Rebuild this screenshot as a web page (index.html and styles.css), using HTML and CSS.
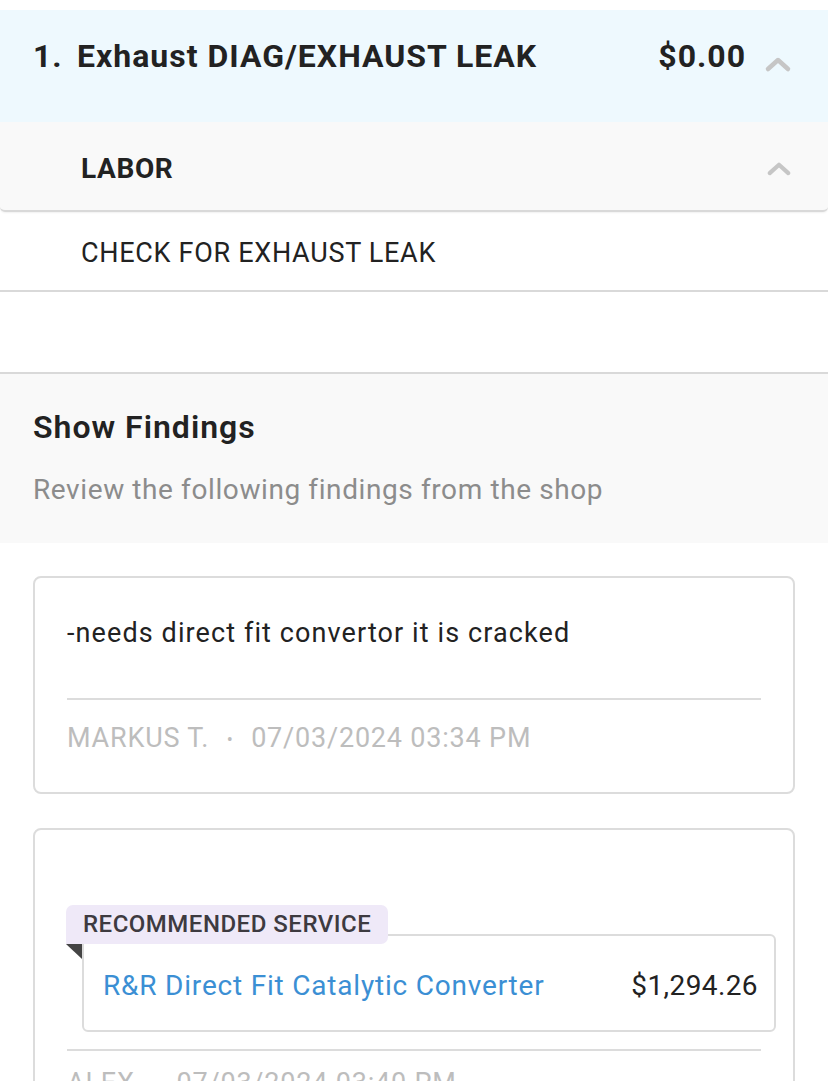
FILE: index.html
```html
<!DOCTYPE HTML>
<html>
	<head>
		<meta charset="utf-8">
		<title>Service findings</title>
		<link rel="stylesheet" href="styles.css">
	</head>
	<body>

		<div class="service-header">
			<span class="service-number">1.</span>
			<span class="service-title">Exhaust DIAG/EXHAUST LEAK</span>
			<span class="service-price">$0.00</span>
			<svg class="chevron" viewBox="0 0 28 18" width="28" height="18"><path d="M4 14 L14 5 L24 14" /></svg>
		</div>

		<div class="labor-header">
			<span class="labor-title">LABOR</span>
			<svg class="chevron chevron-small" viewBox="0 0 28 18" width="26" height="17"><path d="M4 14 L14 5 L24 14" /></svg>
		</div>

		<div class="labor-row">CHECK FOR EXHAUST LEAK</div>

		<div class="findings-header">
			<h2 class="findings-title">Show Findings</h2>
			<p class="findings-subtitle">Review the following findings from the shop</p>
		</div>

		<div class="findings-list">

			<div class="finding-card">
				<p class="finding-text">-needs direct fit convertor it is cracked</p>
				<div class="finding-meta">MARKUS T. <span class="dot">&bull;</span> 07/03/2024 03:34 PM</div>
			</div>

			<div class="finding-card">
				<p class="finding-text finding-text-empty"></p>
				<div class="recommended">
					<div class="recommended-badge">RECOMMENDED SERVICE</div>
					<div class="recommended-box">
						<a class="recommended-name" href="#">R&amp;R Direct Fit Catalytic Converter</a>
						<span class="recommended-price">$1,294.26</span>
					</div>
				</div>
				<div class="finding-meta">ALEX <span class="dot">&bull;</span> 07/03/2024 03:40 PM</div>
			</div>

		</div>

	</body>
</html>
```

FILE: styles.css
```css
* {
	box-sizing:				border-box;
}

html,
body {
	background:				#ffffff;
	color:					#222222;
	font-family:			Roboto, "Liberation Sans", sans-serif;
	margin:					0;
	padding:				0;
}

body {
	padding-top:			10px;
}

p,
h2 {
	margin:					0;
}

.chevron path {
	fill:					none;
	stroke:					#c6c6c6;
	stroke-linecap:			round;
	stroke-linejoin:		round;
	stroke-width:			4.5;
}

/* service header */

.service-header {
	align-items:			center;
	background:				#eef9fe;
	display:				flex;
	font-size:				32px;
	font-weight:			700;
	height:					112px;
	letter-spacing:			1px;
	padding:				0 36px 20px 33px;
}

.service-number {
	width:					44px;
}

.service-title {
	flex:					1;
}

.service-price {
	margin-right:			18px;
}

.chevron {
	margin-top:				16px;
}

/* labor */

.labor-header {
	align-items:			center;
	background:				#f9f9f9;
	border-bottom:			2px solid #d9d9d9;
	border-radius:			0 0 5px 5px;
	box-shadow:				0 1px 2px rgba(0,0,0,0.06);
	display:				flex;
	height:					90px;
	justify-content:		space-between;
	padding:				4px 36px 0 81px;
}

.labor-title {
	font-size:				28px;
	font-weight:			700;
	letter-spacing:			0.6px;
}

.chevron-small {
	margin-top:				0;
}

.labor-row {
	align-items:			center;
	border-bottom:			2px solid #d9d9d9;
	display:				flex;
	font-size:				27px;
	height:					80px;
	letter-spacing:			0.7px;
	padding:				4px 81px 0;
}

/* findings */

.findings-header {
	background:				#f9f9f9;
	border-top:				2px solid #d9d9d9;
	margin-top:				80px;
	padding:				33px 33px 33px;
}

.findings-title {
	font-size:				32px;
	font-weight:			600;
	letter-spacing:			1px;
	line-height:			40px;
}

.findings-subtitle {
	color:					#8c8c8c;
	font-size:				28px;
	letter-spacing:			0.6px;
	line-height:			40px;
	margin-top:				23px;
}

.findings-list {
	display:				flex;
	flex-direction:			column;
	gap:					34px;
	padding:				33px;
}

.finding-card {
	border:					2px solid #dcdcdc;
	border-radius:			8px;
	padding:				34px 32px 0;
}

.finding-text {
	border-bottom:			2px solid #dcdcdc;
	font-size:				27px;
	letter-spacing:			1.1px;
	line-height:			36px;
	margin-top:				3px;
	padding-bottom:			47px;
}

.finding-text-empty {
	border-bottom:			none;
	height:					41px;
	margin-top:				0;
	padding:				0;
}

.finding-meta {
	color:					#bdbdbd;
	font-size:				27px;
	letter-spacing:			0.8px;
	line-height:			36px;
	padding:				20px 0 34px;
}

.dot {
	font-size:				18px;
	margin:					0 10px;
	vertical-align:			middle;
}

/* recommended service */

.recommended {
	border-bottom:			2px solid #dcdcdc;
	padding:				29px 0 17px;
	position:				relative;
}

.recommended + .finding-meta {
	padding-top:			14px;
}

.recommended-badge {
	background:				#efe9f8;
	border-radius:			7px 7px 7px 0;
	color:					#3d3a40;
	font-size:				24px;
	font-weight:			500;
	height:					39px;
	left:					-1px;
	letter-spacing:			0.5px;
	line-height:			39px;
	padding:				0 17px;
	position:				absolute;
	top:					0;
	z-index:				2;
}

.recommended-badge:after {
	border-left:			16px solid transparent;
	border-top:				15px solid #444444;
	content:				"";
	left:					0;
	position:				absolute;
	top:					39px;
}

.recommended-box {
	align-items:			center;
	border:					2px solid #dcdcdc;
	border-radius:			6px;
	display:				flex;
	height:					98px;
	justify-content:		space-between;
	margin:					0 -15px 0 15px;
	padding:				6px 16px 0 19px;
}

.recommended-name {
	color:					#3b8fd4;
	font-size:				28px;
	letter-spacing:			0.8px;
	text-decoration:		none;
}

.recommended-price {
	font-size:				28px;
	letter-spacing:			0.4px;
}
```
